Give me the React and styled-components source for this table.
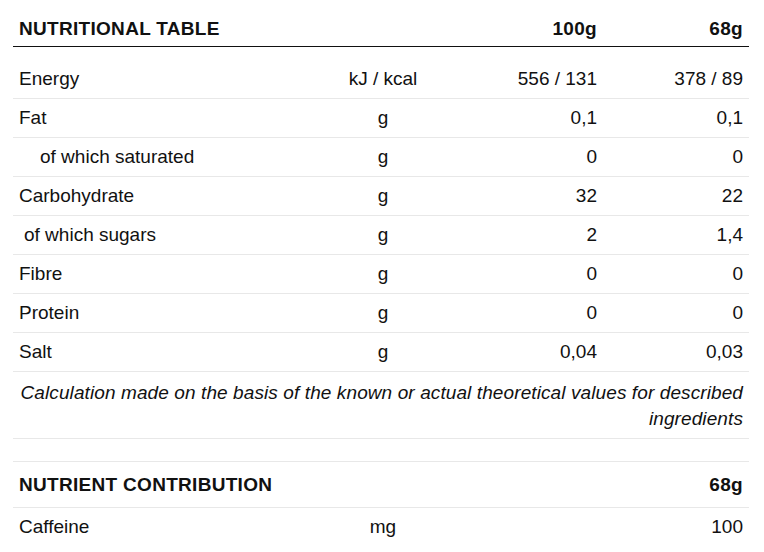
import React from 'react';
import styled, { createGlobalStyle } from 'styled-components';

const GlobalStyle = createGlobalStyle`
  body {
    margin: 0;
    background: #fff;
    font-family: "Liberation Sans", Arial, sans-serif;
    color: #111;
  }
`;

const Wrapper = styled.div`
  padding: 11px 15px 0 13px;
  width: 736px;
`;

const Row = styled.div`
  display: grid;
  grid-template-columns: 270px 188px 120px 1fr;
  align-items: center;
  padding: 0 6px;
  height: ${(p) => p.$h || 38}px;
  border-bottom: 1px solid ${(p) => (p.$dark ? '#111' : p.$last ? 'transparent' : '#e8e8e8')};
  font-size: 19px;
  font-weight: ${(p) => (p.$bold ? 700 : 400)};
  letter-spacing: ${(p) => (p.$bold ? '0.3px' : '0')};
`;

const Body = styled.div`
  padding-top: 13px;
`;

const Label = styled.div`
  padding-left: ${(p) => p.$indent || 0}px;
  white-space: nowrap;
`;

const Unit = styled.div`
  text-align: center;
`;

const Num = styled.div`
  text-align: right;
`;

const Note = styled.div`
  padding: 8px 6px 6px 6px;
  font-size: 19px;
  font-style: italic;
  line-height: 26px;
  letter-spacing: 0.1px;
  text-align: right;
  white-space: nowrap;
  border-bottom: 1px solid #e8e8e8;
`;

const Gap = styled.div`
  height: 22px;
  border-bottom: 1px solid #e8e8e8;
`;

const rows = [
  ['Energy', 'kJ / kcal', '556 / 131', '378 / 89', 0],
  ['Fat', 'g', '0,1', '0,1', 0],
  ['of which saturated', 'g', '0', '0', 21],
  ['Carbohydrate', 'g', '32', '22', 0],
  ['of which sugars', 'g', '2', '1,4', 5],
  ['Fibre', 'g', '0', '0', 0],
  ['Protein', 'g', '0', '0', 0],
  ['Salt', 'g', '0,04', '0,03', 0],
];

export default function App() {
  return (
    <Wrapper>
      <GlobalStyle />
      <Row $bold $dark $h={35}>
        <Label>NUTRITIONAL TABLE</Label>
        <Unit />
        <Num>100g</Num>
        <Num>68g</Num>
      </Row>
      <Body>
        {rows.map(([name, unit, a, b, indent]) => (
          <Row key={name}>
            <Label $indent={indent}>{name}</Label>
            <Unit>{unit}</Unit>
            <Num>{a}</Num>
            <Num>{b}</Num>
          </Row>
        ))}
      </Body>
      <Note>
        Calculation made on the basis of the known or actual theoretical values for described
        <br />
        ingredients
      </Note>
      <Gap />
      <Row $bold $h={45}>
        <Label>NUTRIENT CONTRIBUTION</Label>
        <Unit />
        <Num />
        <Num>68g</Num>
      </Row>
      <Row $last>
        <Label>Caffeine</Label>
        <Unit>mg</Unit>
        <Num />
        <Num>100</Num>
      </Row>
    </Wrapper>
  );
}
